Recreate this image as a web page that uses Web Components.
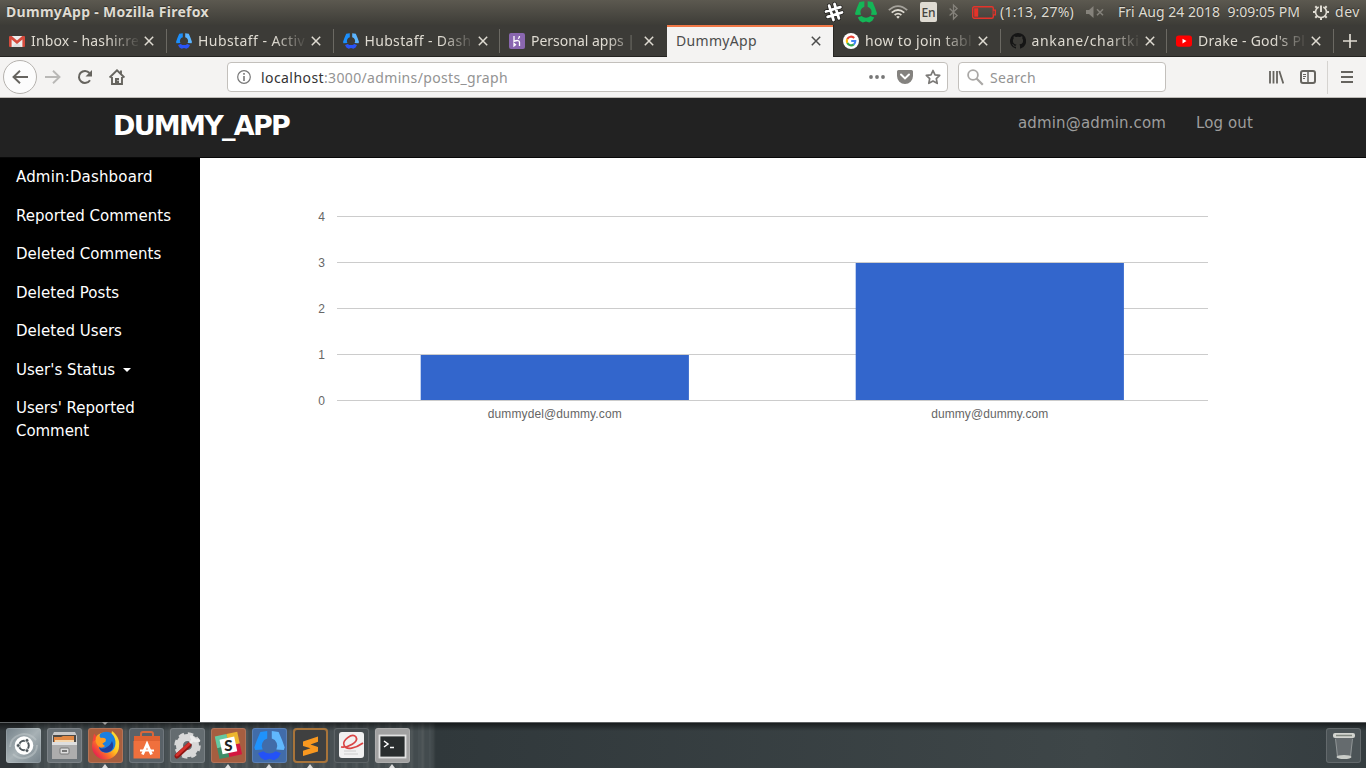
<!DOCTYPE html>
<html lang="en">
<head>
<meta charset="utf-8">
<title>DummyApp</title>
<style>
html,body{margin:0;padding:0;height:100%;overflow:hidden;background:#fff}
body{font-family:"Noto Sans",sans-serif}
</style>
</head>
<body>
<desk-screen></desk-screen>
<script>
const define = (name, html, setup) => {
  const tpl = document.createElement('template');
  tpl.innerHTML = html;
  customElements.define(name, class extends HTMLElement {
    constructor() {
      super();
      this.attachShadow({mode: 'open'}).appendChild(tpl.content.cloneNode(true));
    }
    connectedCallback() { if (setup) setup.call(this, this.shadowRoot); }
  });
};

// A single line of text tracked so that it fills the width given in "w".
define('fit-text', `<style>:host{display:block;flex:none;white-space:pre;line-height:20px}span{display:inline-block}</style><span><slot></slot></span>`,
function (r) {
  const w = +this.getAttribute('w'), s = r.querySelector('span');
  this.style.width = w + 'px';
  const n = this.textContent.length, nat = s.getBoundingClientRect().width;
  if (nat && n) s.style.letterSpacing = ((w - nat) / n).toFixed(3) + 'px';
});

const RING = (a, b, c) => `
  <path fill="${a}" d="M6.800 .2L3.200.8 1.300 5.200 0 9l.5 1.200 3.900-.2A4 4 0 0 1 6.800 4.200z"/>
  <path fill="${b}" d="M9.200 .2L12.800.8 14.700 5.200 16 9l-.5 1.200-3.900-.2A4 4 0 0 0 9.200 4.200z"/>
  <path fill="${c}" d="M2 12l2.700-1.100q3.300 2.400 6.600 0L14 12l-1.400 2.400-2.200 1.300L8 14.900l-2.400.8-2.200-1.300z"/>`;

const FAV = {
  gmail: `<path fill="#eee" d="M1 3h14v11H1z"/><path fill="#ddd" d="M3 14l5-5 5 5z"/><path fill="#d54b3d" d="M1 3h1.700L8 7.500 13.300 3H15a1 1 0 0 1 1 1v9a1 1 0 0 1-1 1h-1.600V6.600L8 11 2.600 6.600V14H1a1 1 0 0 1-1-1V4a1 1 0 0 1 1-1z"/>`,
  hub: RING('#1c8ffb', '#5bb4ff', '#2a54f7'),
  heroku: `<rect width="16" height="16" rx="2" fill="#8a67b0"/><path d="M5 3v5.500c3-1.500 5.500-1.300 5.500.8V13M10.500 3c0 1-.4 2-1.300 2.700M5 10.500V13l1.500-1.200z" fill="none" stroke="#fff" stroke-width="1.300"/>`,
  google: `<circle cx="8" cy="8" r="8" fill="#fff"/><g fill="none" stroke-width="2.100"><path stroke="#ea4335" d="M4.300 6a4.300 4.300 0 0 1 6.900-1.100"/><path stroke="#fbbc05" d="M4.300 10a4.300 4.300 0 0 1 0-4"/><path stroke="#34a853" d="M4.300 10a4.300 4.300 0 0 0 6.500 1.400"/><path stroke="#4285f4" d="M8.200 8h4.100a4.300 4.300 0 0 1-1.500 3.400"/></g>`,
  github: `<path fill="#151515" d="M8 0a8 8 0 0 0-2.500 15.600c.4.100.5-.2.500-.4v-1.500c-2.200.5-2.700-.9-2.700-.9-.4-.9-.9-1.200-.9-1.200-.7-.5.1-.5.1-.5.800.1 1.200.8 1.200.8.7 1.200 1.900.9 2.300.7.1-.5.300-.9.5-1.100-1.800-.2-3.600-.9-3.600-4 0-.9.300-1.600.8-2.100-.1-.2-.4-1 .1-2.100 0 0 .7-.2 2.200.8a7.600 7.600 0 0 1 4 0c1.500-1 2.200-.8 2.200-.8.4 1.100.2 1.900.1 2.100.5.600.8 1.300.8 2.100 0 3.100-1.900 3.700-3.700 4 .3.200.6.700.6 1.500v2.200c0 .2.100.5.600.4A8 8 0 0 0 8 0z"/>`,
  youtube: `<rect y="2.500" width="16" height="11.300" rx="2.800" fill="#f00"/><path fill="#fff" d="M6.500 5.800l4 2.300-4 2.300z"/>`
};

define('browser-tab', `<style>
:host{display:flex;align-items:center;box-sizing:border-box;height:32px;padding-left:9px;position:relative;color:#dfdbd2;font-size:14px;border-bottom:1px solid #242320;min-width:0}
:host([sep])::after{content:"";position:absolute;right:0;top:4px;width:1px;height:24px;background:#6b6963}
:host([active]){background:#f4f3f2;color:#4c4c4c;border-bottom:0;border-right:1px solid #282724;box-shadow:inset 0 2px #f07746}
.ico{width:16px;height:16px;margin-right:6px;flex:none}
.t{overflow:hidden;width:107px;flex:none;-webkit-mask:linear-gradient(90deg,#000 76px,transparent 110px)}
:host([active]) .ico{display:none}
:host([active]) .t{width:129px;-webkit-mask:none}
.x{width:10px;height:10px;margin-left:6px;flex:none}
</style><svg class="ico" viewBox="0 0 16 16"></svg><div class="t"><slot></slot></div>
<svg class="x" viewBox="0 0 10 10"><path d="M.8.8l8.400 8.400M9.200.8L.8 9.200" fill="none" stroke="currentColor" stroke-width="1.500"/></svg>`,
function (r) { r.querySelector('svg').innerHTML = FAV[this.getAttribute('icon')] || ''; });

define('system-bar', `<style>
:host{display:flex;align-items:center;height:25px;box-sizing:border-box;padding:0 6px 1px;background:linear-gradient(#5c5950,#3d3c37);color:#dfdbd2;font-size:14px;text-shadow:0 -1px 1px #0006}
.b{font-weight:700}svg{flex:none;overflow:visible}
.en{width:20px;height:20px;border-radius:2px;background:#dfdbd2;color:#45433e;text-shadow:none;font-size:12px;font-weight:500;line-height:21px;text-align:center}
</style>
<fit-text class="b" w="203">DummyApp - Mozilla Firefox</fit-text>
<svg style="margin-left:616px" width="18" height="18" viewBox="0 0 18 18"><g transform="rotate(-17 9 9)" stroke-linecap="round"><path d="M6.200 1.500v15M11.800 1.500v15M1.500 6.200h15M1.500 11.800h15" stroke="#22211e" stroke-width="4.400"/><path d="M6.200 1.500v15M11.800 1.500v15M1.500 6.200h15M1.500 11.800h15" stroke="#fff" stroke-width="2.800"/></g></svg>
<svg style="margin-left:12px" width="22" height="22" viewBox="0 0 16 16">${RING('#14b657','#14b657','#14b657')}</svg>
<svg style="margin-left:11px" width="20" height="14" viewBox="0 0 20 14"><g fill="none" stroke-width="1.700"><path stroke="#a5a29b" d="M.8 5.200Q10-3 19.200 5.200"/><path stroke="#dfdbd2" d="M3.700 7.600q6.300-5.200 12.600 0M6.600 10q3.400-2.600 6.800 0"/></g><path fill="#dfdbd2" d="M8.200 11.700q1.800-1.200 3.600 0L10 13.800z"/></svg>
<div class="en" style="margin-left:12px">En</div>
<svg style="margin-left:12px" width="9" height="16" viewBox="0 0 9 16"><path d="M.6 4.500l7.500 7L4.500 15V1l3.600 3.500-7.500 7" fill="none" stroke="#85827b" stroke-width="1.300"/></svg>
<svg style="margin-left:14px" width="24" height="13" viewBox="0 0 24 13"><rect x=".7" y=".7" width="20.600" height="11.600" rx="1.500" fill="none" stroke="#e5332a" stroke-width="1.400"/><path fill="#e5332a" d="M2.200 2.200h4v8.600h-4zM21.500 3.500h2.500v6h-2.500z"/><path fill="#4b4942" d="M21.500 4.700h1.200v3.600h-1.200z"/></svg>
<fit-text style="margin-left:4px" w="74">(1:13, 27%)</fit-text>
<svg style="margin-left:12px" width="18" height="12" viewBox="0 0 18 12"><path fill="#85827b" d="M0 4h3l4.500-4v12L3 8H0z"/><path d="M11 3.200l6 6m0-6l-6 6" stroke="#85827b" stroke-width="1.500"/></svg>
<fit-text style="margin-left:14px" w="182">Fri Aug 24 2018  9:09:05 PM</fit-text>
<svg style="margin-left:13px" width="16" height="16" viewBox="0 0 16 16"><g fill="none" stroke="#dfdbd2"><path stroke-width="1.700" d="M5.700 3.100a5.500 5.500 0 1 0 4.600 0"/><path stroke-width="2" d="M8 1.500V8M8 13v3M0 8h3M13 8h3M2.300 2.300l2 2M13.700 2.300l-2 2M2.300 13.700l2-2M13.700 13.700l-2-2"/></g></svg>
<fit-text style="margin-left:6px" w="25">dev</fit-text>`);

define('tab-strip', `<style>
:host{display:grid;grid-template-columns:167px 167px 166px 167px 167px 167px 166px 167px 1fr;height:32px;background:#3c3b37}
.plus{display:flex;align-items:center;justify-content:center;border-bottom:1px solid #242320}
</style>
<browser-tab icon="gmail" sep><fit-text w="108">Inbox - hashir.re</fit-text></browser-tab>
<browser-tab icon="hub" sep><fit-text w="107">Hubstaff - Activ</fit-text></browser-tab>
<browser-tab icon="hub" sep style="padding-left:8.500px"><fit-text w="107">Hubstaff - Dash</fit-text></browser-tab>
<browser-tab icon="heroku"><fit-text w="104">Personal apps |</fit-text></browser-tab>
<browser-tab active><fit-text w="81">DummyApp</fit-text></browser-tab>
<browser-tab icon="google" sep><fit-text w="107">how to join tabl</fit-text></browser-tab>
<browser-tab icon="github" sep style="padding-left:8.500px"><fit-text w="108">ankane/chartki</fit-text></browser-tab>
<browser-tab icon="youtube" sep><fit-text w="107">Drake - God's Pl</fit-text></browser-tab>
<div class="plus"><svg width="14" height="14"><path d="M7 0v14M0 7h14" stroke="#dfdbd2" stroke-width="1.700"/></svg></div>`);

define('nav-toolbar', `<style>
:host{display:flex;align-items:center;height:41px;box-sizing:border-box;background:#f4f3f2;border-bottom:1px solid #bdbab6;padding-left:3px;font-size:14px;color:#333}
svg{flex:none;display:block}
.back{width:32px;height:32px;border:1px solid #b5b2ae;border-radius:50%;background:#fcfcfc;display:grid;place-items:center}
.box{display:flex;align-items:center;box-sizing:border-box;height:30px;background:#fff;border:1px solid #c3c0bc;border-radius:4px}
fit-text{padding-top:1px}
.g{color:#939393}
.ln{width:1px;height:33px;background:#d5d3d0}
</style>
<div class="back"><svg width="16" height="14"><path d="M8 .8L1.500 7 8 13.200M1.500 7H16" fill="none" stroke="#66645f" stroke-width="1.900"/></svg></div>
<svg style="margin-left:8px" width="16" height="14"><path d="M8 .8L14.500 7 8 13.200M14.500 7H0" fill="none" stroke="#b9b8b6" stroke-width="1.900"/></svg>
<svg style="margin-left:16px" width="16" height="16"><path d="M13 11.200A6 6 0 1 1 12.500 4" fill="none" stroke="#66645f" stroke-width="2"/><path d="M15 1v6.500H8.500z" fill="#66645f"/></svg>
<svg style="margin-left:16px" width="16" height="16"><path d="M.6 8.600L8 1.300l7.400 7.300M3 8v7h10V8M12 1.500v4" fill="none" stroke="#66645f" stroke-width="1.900"/><path d="M6 9h4v6H6z" fill="#66645f"/><path d="M8.500 11h1v1h-1z" fill="#fff"/></svg>
<div class="box" style="width:721px;margin-left:102px;padding-left:9px">
<svg width="14" height="14"><circle cx="7" cy="7" r="6.300" fill="none" stroke="#777" stroke-width="1.200"/><path d="M7 3v1.700M7 6v5" stroke="#777" stroke-width="1.600"/></svg>
<fit-text style="margin-left:10px" w="63">localhost</fit-text><fit-text class="g" w="184">:3000/admins/posts_graph</fit-text>
<svg style="margin-left:361px" width="16" height="4"><g fill="#777"><circle cx="2" cy="2" r="1.900"/><circle cx="8" cy="2" r="1.900"/><circle cx="14" cy="2" r="1.900"/></g></svg>
<svg style="margin-left:12px" width="16" height="14"><path fill="#84827f" d="M1.500 0h13A1.500 1.500 0 0 1 16 1.500V6A8 8 0 0 1 0 6V1.500A1.500 1.500 0 0 1 1.500 0z"/><path d="M4 4.500l4 3.900 4-3.900" fill="none" stroke="#fff" stroke-width="2" stroke-linecap="round"/></svg>
<svg style="margin-left:12px" width="16" height="16"><path d="M8 1.500l2 4.300 4.700.6-3.400 3.200.9 4.700L8 12l-4.200 2.300.9-4.700L1.300 6.400 6 5.800z" fill="none" stroke="#7b7977" stroke-width="1.700" stroke-linejoin="round"/></svg>
</div>
<div class="box g" style="width:208px;margin-left:10px;padding-left:8px"><svg width="17" height="17"><circle cx="6" cy="6" r="4.900" fill="none" stroke="#aaa8a6" stroke-width="1.800"/><path d="M9.500 9.500l6.300 6.300" stroke="#aaa8a6" stroke-width="2.200"/></svg><fit-text style="margin-left:6px" w="46">Search</fit-text></div>
<svg style="margin-left:103px" width="15" height="14"><path d="M1 1v12.500M4.500 1v12.500M8 1v12.500M10.300 1l4 12.500" fill="none" stroke="#66645f" stroke-width="1.800"/></svg>
<svg style="margin-left:16px" width="16" height="14"><rect x="1" y="1" width="14" height="12" rx="2" fill="none" stroke="#66645f" stroke-width="2"/><path d="M8 1v12" stroke="#66645f" stroke-width="1.500"/><path d="M3 4.500h3M3 6.500h3M3 8.500h2" stroke="#66645f"/></svg>
<div class="ln" style="margin-left:11px"></div>
<svg style="margin-left:13px" width="12" height="12"><path d="M0 1h12M0 6h12M0 11h12" stroke="#66645f" stroke-width="1.900"/></svg>`);

define('app-header', `<style>
:host{display:flex;height:60px;box-sizing:border-box;background:#222;border-bottom:1px solid #080808;padding-left:113px;font:15px "DejaVu Sans",sans-serif;color:#9d9d9d}
.brand{font-size:27px;font-weight:700;color:#fff;line-height:56px}
.l{line-height:50px}
</style><fit-text class="brand" w="176">DUMMY_APP</fit-text><fit-text class="l" style="margin-left:729px" w="148">admin@admin.com</fit-text><fit-text class="l" style="margin-left:30px" w="57">Log out</fit-text>`);

define('side-link', `<style>:host{display:block;padding:8px 16px;line-height:22.500px}
:host([caret]) i{display:inline-block;border:4px solid transparent;border-top-color:#fff;border-bottom:0;margin-left:8px;vertical-align:middle}</style><slot></slot><i></i>`);

define('side-menu', `<style>:host{display:block;width:200px;box-sizing:border-box;background:#000;color:#fff;font:15px "DejaVu Sans",sans-serif}
side-link{letter-spacing:.03px}side-link:first-of-type{letter-spacing:.17px}side-link:last-of-type{letter-spacing:-.05px}</style>
<side-link>Admin:Dashboard</side-link><side-link>Reported Comments</side-link><side-link>Deleted Comments</side-link><side-link>Deleted Posts</side-link><side-link>Deleted Users</side-link><side-link caret>User's Status</side-link><side-link>Users' Reported Comment</side-link>`);

define('column-chart', `<style>:host{display:block}svg{display:block}text{font:12px "Liberation Sans",Arial,sans-serif;fill:#666}</style><svg width="940" height="240"></svg>`,
function (r) {
  const data = JSON.parse(this.getAttribute('data')), base = 202, step = 46;
  let s = '';
  for (let v = 0; v <= 4; v++) {
    const y = base - v * step;
    s += `<rect x="37" y="${y}" width="871" height="1" fill="#ccc"/><text x="25" y="${y + 5}" text-anchor="end">${v}</text>`;
  }
  data.forEach(([name, n], i) => {
    const x = 120.7 + i * 435;
    s += `<rect x="${x}" y="${base + 1 - n * step}" width="268.200" height="${n * step - 1}" fill="#3366cc"/><text x="${x + 134}" y="${base + 18}" text-anchor="middle" textLength="${i ? 117 : 134}">${name}</text>`;
  });
  r.querySelector('svg').innerHTML = s;
});

const DOCK = {
  dash: ['linear-gradient(135deg,#75828a,#a7b1b5 50%,#75828a)', `<path d="M4 19C5 7 20 1 30 12M31 17c0 11-15 18-24 9" fill="none" stroke="#c1c9cc" stroke-width="2" opacity=".5"/><circle cx="18" cy="17.500" r="9.300" fill="#fff"/><circle cx="18" cy="17.500" r="4.800" fill="none" stroke="#4d565b" stroke-width="2"/><g fill="#4d565b" stroke="#fff" stroke-width=".8"><circle cx="12.200" cy="17.500" r="1.900"/><circle cx="21" cy="12.400" r="1.900"/><circle cx="21" cy="22.600" r="1.900"/></g>`],
  files: ['#697176', `<path fill="#c9c9c9" d="M7 4h21l2 4v23H5V8z"/><path fill="#4d4945" d="M6 7h23v8H6z"/><path fill="#e18742" d="M7 9h7l2-1h11v6H7z"/><path fill="#f5d8b0" d="M8 12h19v2H8z"/><path fill="#dedede" d="M5 14h25v3H5z"/><path fill="#adadad" d="M5 17h25v14H5z"/><rect x="13" y="20" width="9" height="6" rx="1" fill="#ddd" stroke="#777"/><path d="M15 23h5" stroke="#555" stroke-width="1.500"/>`],
  firefox: ['#a95f3e', `<defs><linearGradient id="f" x1=".9" y1=".1" x2=".1" y2=".8"><stop stop-color="#fff14a"/><stop offset=".4" stop-color="#ffc21f"/><stop offset=".7" stop-color="#fb6a2c"/><stop offset="1" stop-color="#e8224f"/></linearGradient></defs><circle cx="17.500" cy="18" r="13.500" fill="url(#f)"/><path fill="#f5433a" d="M4.500 14L6 5.500l4 5z"/><path fill="#ffd52e" d="M23 8l1-5c5 4 8 9 7 15z"/><path fill="#1b7fe0" d="M12 6c4-3 9-3 12 0 5 5 5 15-2 18-5 2-11-.5-11-5 2 1 4 1 6-1l-3-2 4-3c-1-1.500-3-1-5-1-1-2-2-4-1-6z"/><path fill="#203f9c" d="M24 13c3 6 0 11-5 11.500-4 .3-7-2-8-5.500 2 2 5 2 8 0 2-1 4-3 5-6z"/><path fill="#ff9a21" d="M8 9c2-1 4-.5 5 1 2-.8 5 0 5 2l-4 3.500 2 2c-1.500 1.500-3 1.500-5 1-3-2-4-6-3-9.500z"/>`],
  store: ['#596268', `<path d="M12 10V6q0-2 2-2h8q2 0 2 2v4" fill="none" stroke="#d9673a" stroke-width="2"/><path fill="#df6131" d="M5 8h26v5H5z"/><path fill="#f0703d" d="M4.500 13h26.500v17.500H4.500z"/><path d="M13.500 26.500L18 16l4.500 10.500" fill="none" stroke="#fff" stroke-width="2.800"/><path d="M11 22.500h14" stroke="#fff" stroke-width="2"/>`],
  settings: ['#646c70', `<circle cx="17.500" cy="17.500" r="8" fill="none" stroke="#d8d8d8" stroke-width="7"/><circle cx="17.500" cy="17.500" r="12" fill="none" stroke="#d8d8d8" stroke-width="2.500" stroke-dasharray="5.500 3.920"/><path d="M7 28L19 17" stroke="#8e1715" stroke-width="5" stroke-linecap="round"/><path d="M7 27L19 16" stroke="#d4322d" stroke-width="3" stroke-linecap="round"/><path d="M20 15l5-5M21.500 7.500c0 4 4 7 8 4" fill="none" stroke="#ececec" stroke-width="3"/>`],
  slack: ['#a65e40', `<g transform="rotate(-12 17 18)"><path fill="#65c9a2" d="M6 6h12v12H6z"/><path fill="#edb62f" d="M18 6h11v12H18z"/><path fill="#3f8d68" d="M6 18h10v11H6z"/><path fill="#d4173f" d="M16 18h13v11H16z"/><path fill="#fff" d="M10 10h15v15H10z"/></g><text x="17.500" y="23" text-anchor="middle" font-family="Lato,sans-serif" font-weight="900" font-size="15" fill="#222">S</text>`],
  hub: ['#416ca9', `<g transform="translate(2.300 2.500) scale(1.900)">${RING('#1f92fb', '#60b8fd', '#2452f6')}</g>`],
  sublime: ['#3f4040', `<rect x="1" y="1" width="33" height="33" rx="3" fill="none" stroke="#a8743a" stroke-width="2"/><path fill="#f89820" d="M10 13.500l15-5v5.300l-7.500 2.700 7.500 2.500v4.500L10 28v-5.200l7.500-2.600L10 18z"/>`],
  doc: ['#464d50', `<rect x="5" y="4" width="25" height="26" rx="3" fill="#f1f1f1"/><path d="M7 19c7 1 18-5 15-10-4-5-14 4-12 8 2 6 12 3 19-2" fill="none" stroke="#da4545" stroke-width="1.700"/><path d="M10 23h12M10 26h14" stroke="#ccc"/>`],
  term: ['#a1a1a1', `<rect x="4.500" y="7.500" width="26" height="22" fill="#292d2e" stroke="#e1e1e1" stroke-width="1.800"/><path d="M9 13l4 3-4 3M15 19.500h4" fill="none" stroke="#fff" stroke-width="1.500"/>`],
  trash: ['#4b5356', `<path fill="#8b9293" opacity=".4" d="M9 9h18l-2 21H11z"/><path d="M9.500 11l2 17M26.500 11l-2 17" stroke="#bcc0bf" opacity=".5"/><rect x="7" y="5" width="22" height="5" rx="2" fill="#d2d4cf"/><path d="M10 7.500h16" stroke="#80877f" stroke-width="1.500"/><ellipse cx="18" cy="29" rx="7.500" ry="2" fill="#c9ccc8"/>`]
};

define('dock-icon', `<style>:host{display:block;position:relative;width:35px;height:35px;flex:none}
div{width:35px;height:35px;border-radius:3px;box-shadow:inset 0 0 0 1px #ffffff22}svg{display:block}
b{display:none;position:absolute;left:14px;bottom:-5px;border:3.500px solid transparent;border-bottom:4px solid #ddd;border-top:0}
:host([run]) b{display:block}
u{display:none;position:absolute;left:14px;top:-6px;border:3px solid transparent;border-top-color:#999;border-bottom:0}
:host([focus]) u{display:block}</style><div><svg width="35" height="35" viewBox="0 0 35 35"></svg></div><b></b><u></u>`,
function (r) {
  const [bg, art] = DOCK[this.getAttribute('name')];
  r.querySelector('div').style.background = bg;
  r.querySelector('svg').innerHTML = art;
});

define('app-dock', `<style>:host{display:flex;gap:6px;height:46px;box-sizing:border-box;padding:5px 5px 0 5.500px;border-top:1px solid #5e6163;
background:linear-gradient(#0008,#0000 8px),linear-gradient(90deg,#303538 0 22px,#0000 36px 430px,#30383b 436px,#3e4648 80%,#353d40),repeating-linear-gradient(90deg,#485053 0 3px,#505759 4px 5px,#434b4e 7px 11px)}
.sp{flex:1}</style>
<dock-icon name="dash"></dock-icon><dock-icon name="files"></dock-icon><dock-icon name="firefox" run focus></dock-icon><dock-icon name="store"></dock-icon><dock-icon name="settings"></dock-icon><dock-icon name="slack" run></dock-icon><dock-icon name="hub" run></dock-icon><dock-icon name="sublime" run></dock-icon><dock-icon name="doc"></dock-icon><dock-icon name="term" run></dock-icon><div class="sp"></div><dock-icon name="trash"></dock-icon>`);

define('desk-screen', `<style>:host{display:flex;flex-direction:column;width:1366px;height:768px;overflow:hidden}
system-bar,tab-strip,nav-toolbar,app-header,app-dock{flex:none}
main{flex:1;display:flex;min-height:0}section{flex:1;padding:40px 0 0 100px}side-menu{flex:none}</style>
<system-bar></system-bar><tab-strip></tab-strip><nav-toolbar></nav-toolbar><app-header></app-header>
<main><side-menu></side-menu><section><column-chart data='[["dummydel@dummy.com",1],["dummy@dummy.com",3]]'></column-chart></section></main>
<app-dock></app-dock>`);
</script>
</body>
</html>
